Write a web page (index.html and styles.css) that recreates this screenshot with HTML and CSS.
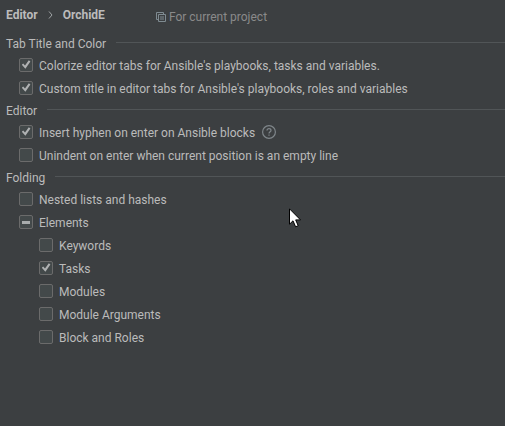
FILE: index.html
```html
<!DOCTYPE html>
<html lang="en">
<head>
    <meta charset="UTF-8">
    <meta name="viewport" content="width=device-width, initial-scale=1.0">
    <title>OrchidE Settings</title>
    <link rel="stylesheet" href="styles.css">
</head>
<body>
    <header class="header">
        <nav class="breadcrumb">
            <span>Editor</span>
            <svg class="chevron" width="5" height="8" viewBox="0 0 5 8"><path d="M1 0.5L4 4L1 7.5"/></svg>
            <span>OrchidE</span>
        </nav>
        <div class="scope">
            <svg class="scope-icon" width="10" height="10" viewBox="0 0 10 10"><path d="M2.5 7.5H0.5V0.5H7.5V2.5M2.5 2.5H9.5V9.5H2.5ZM4 5H8M4 7H8"/></svg>
            <span>For current project</span>
        </div>
    </header>

    <main>
        <section>
            <h2 class="title">Tab Title and Color</h2>
            <div class="row">
                <label><input type="checkbox" checked>Colorize editor tabs for Ansible's playbooks, tasks and variables.</label>
            </div>
            <div class="row">
                <label><input type="checkbox" checked>Custom title in editor tabs for Ansible's playbooks, roles and variables</label>
            </div>
        </section>

        <section>
            <h2 class="title">Editor</h2>
            <div class="row">
                <label><input type="checkbox" checked>Insert hyphen on enter on Ansible blocks</label>
                <button class="help" type="button" aria-label="Help">
                    <svg width="14" height="14" viewBox="0 0 14 14"><circle cx="7" cy="7" r="6.4"/><path d="M5 5.6C5 4.2 5.9 3.6 7 3.6S9 4.3 9 5.4C9 6.7 7 6.8 7 8.5M7 9.6V10.8"/></svg>
                </button>
            </div>
            <div class="row">
                <label><input type="checkbox">Unindent on enter when current position is an empty line</label>
            </div>
        </section>

        <section>
            <h2 class="title">Folding</h2>
            <div class="row">
                <label><input type="checkbox">Nested lists and hashes</label>
            </div>
            <div class="row">
                <label><input type="checkbox" id="elements">Elements</label>
            </div>
            <div class="children">
                <div class="row">
                    <label><input type="checkbox">Keywords</label>
                </div>
                <div class="row">
                    <label><input type="checkbox" checked>Tasks</label>
                </div>
                <div class="row">
                    <label><input type="checkbox">Modules</label>
                </div>
                <div class="row">
                    <label><input type="checkbox">Module Arguments</label>
                </div>
                <div class="row">
                    <label><input type="checkbox">Block and Roles</label>
                </div>
            </div>
        </section>
    </main>

    <svg class="cursor" width="12" height="20" viewBox="0 0 12 20"><path d="M0.5 0.8V16.2L4 12.8L6.6 18.8L9.2 17.7L6.7 11.9H11.5Z"/></svg>

    <script>
        const elements = document.getElementById("elements");
        const children = document.querySelectorAll(".children input");

        function updateElements() {
            const count = document.querySelectorAll(".children input:checked").length;
            elements.checked = count === children.length;
            elements.indeterminate = count > 0 && count < children.length;
        }

        children.forEach(child => child.addEventListener("change", updateElements));
        elements.addEventListener("change", () => {
            children.forEach(child => child.checked = elements.checked);
        });

        updateElements();
    </script>
</body>
</html>
```
FILE: styles.css
```css
body {
    margin: 0;
    background-color: #3c3f41;
    color: #bbbbbb;
    font-family: Roboto, "Liberation Sans", sans-serif;
    font-size: 12px;
    line-height: 16px;
}

.header {
    display: flex;
    align-items: center;
    gap: 51px;
    height: 33px;
    padding-left: 6px;
}

.breadcrumb {
    display: flex;
    align-items: center;
    gap: 10px;
    padding-bottom: 4px;
    font-weight: bold;
}

.scope {
    display: flex;
    align-items: center;
    gap: 3px;
    color: #8a8a8a;
}

.chevron,
.scope-icon,
.help svg,
.cursor {
    display: block;
    fill: none;
    stroke: #a0a4a6;
}

.scope-icon {
    stroke: #7f8b91;
}

.title {
    display: flex;
    align-items: center;
    gap: 10px;
    height: 19px;
    margin: 0;
    padding: 1px 0 1px 6px;
    font-size: 12px;
    font-weight: normal;
}

.title::after {
    content: "";
    flex: 1;
    height: 1px;
    margin-bottom: 2px;
    background-color: #515557;
}

.row {
    display: flex;
    align-items: center;
    gap: 7px;
    height: 23px;
    padding-left: 19px;
}

.children {
    padding-left: 20px;
}

label {
    display: flex;
    align-items: center;
    gap: 6px;
    white-space: nowrap;
}

input {
    appearance: none;
    position: relative;
    width: 14px;
    height: 14px;
    margin: 0 0 2px;
    border: 1px solid #6b6b6b;
    border-radius: 2px;
    background-color: #43494a;
}

input:checked::after {
    content: "";
    position: absolute;
    inset: 1px;
    background-color: #b0b2b3;
    clip-path: polygon(8% 53%, 22% 40%, 40% 60%, 78% 8%, 94% 20%, 44% 92%);
}

input:indeterminate::after {
    content: "";
    position: absolute;
    inset: 5px 2px 4px;
    background-color: #a8abac;
}

.help {
    padding: 0 0 2px;
    border: none;
    background: none;
}

.help svg {
    stroke: #7f868a;
    stroke-width: 1.2;
}

.cursor {
    position: absolute;
    left: 289px;
    top: 208px;
    fill: #ffffff;
    stroke: #000000;
}
```
